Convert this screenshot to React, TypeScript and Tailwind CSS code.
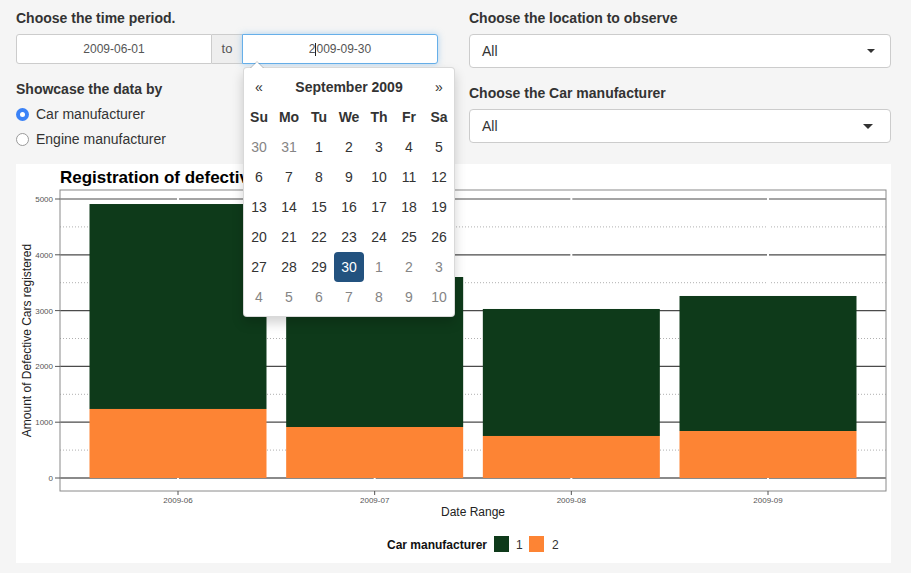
import React from "react";

const bars = [
  { label: "2009-06", total: 4910, second: 1237 },
  { label: "2009-07", total: 3602, second: 914 },
  { label: "2009-08", total: 3029, second: 753 },
  { label: "2009-09", total: 3262, second: 842 },
];

// chart geometry (px inside the white panel)
const left = 44;
const right = 870;
const top = 26;
const bottom = 327;
const step = (right - left) / 4.2;
const barW = step * 0.9;
const yOf = (v: number) => 314 - v * 0.0558;
const cx = (i: number) => left + step * (0.6 + i);

const weeks = [
  [30, 31, 1, 2, 3, 4, 5],
  [6, 7, 8, 9, 10, 11, 12],
  [13, 14, 15, 16, 17, 18, 19],
  [20, 21, 22, 23, 24, 25, 26],
  [27, 28, 29, 30, 1, 2, 3],
  [4, 5, 6, 7, 8, 9, 10],
];

const isOther = (row: number, d: number) => (row === 0 && d > 20) || (row >= 4 && d < 15);

const DefectChart = () => (
  <svg width={875} height={399} className="block">
    {/* minor grid */}
    {[500, 1500, 2500, 3500, 4500].map((v) => (
      <line key={v} x1={left} x2={right} y1={yOf(v)} y2={yOf(v)} stroke="#b0b0b0" strokeWidth={1} strokeDasharray="1 2" />
    ))}
    {/* major grid */}
    {[1000, 2000, 3000, 4000, 5000].map((v) => (
      <line key={v} x1={left} x2={right} y1={yOf(v)} y2={yOf(v)} stroke="#4a4a4a" strokeWidth={1.2} />
    ))}
    <line x1={left} x2={right} y1={yOf(0)} y2={yOf(0)} stroke="#8a8a8a" strokeWidth={2} />
    {bars.map((b, i) => (
      <line key={b.label} x1={cx(i)} x2={cx(i)} y1={top} y2={bottom} stroke="#ffffff" strokeWidth={2} />
    ))}
    {/* bars */}
    {bars.map((b, i) => (
      <g key={b.label}>
        <rect x={cx(i) - barW / 2} y={yOf(b.total)} width={barW} height={yOf(b.second) - yOf(b.total)} fill="#0e3a1a" />
        <rect x={cx(i) - barW / 2} y={yOf(b.second)} width={barW} height={yOf(0) - yOf(b.second)} fill="#fd8434" />
      </g>
    ))}
    {/* panel border */}
    <rect x={left} y={top} width={right - left} height={bottom - top} fill="none" stroke="#8a8a8a" strokeWidth={1} />
    {/* y axis */}
    {[0, 1000, 2000, 3000, 4000, 5000].map((v) => (
      <g key={v}>
        <line x1={left - 5} x2={left} y1={yOf(v)} y2={yOf(v)} stroke="#555" strokeWidth={1} />
        <text x={left - 7} y={yOf(v) + 3} textAnchor="end" fontSize={8} fill="#555">
          {v}
        </text>
      </g>
    ))}
    {/* x axis */}
    {bars.map((b, i) => (
      <g key={b.label}>
        <line x1={cx(i)} x2={cx(i)} y1={bottom} y2={bottom + 4} stroke="#555" strokeWidth={1} />
        <text x={cx(i)} y={bottom + 12} textAnchor="middle" fontSize={8} fill="#555">
          {b.label}
        </text>
      </g>
    ))}
    <text x={(left + right) / 2} y={352} textAnchor="middle" fontSize={12} fill="#222">
      Date Range
    </text>
    <text transform={`translate(15 ${(top + bottom) / 2}) rotate(-90)`} textAnchor="middle" fontSize={12} fill="#222">
      Amount of Defective Cars registered
    </text>
    <text x={left} y={19} fontSize={17} fontWeight={700} fill="#000">
      Registration of defective Cars
    </text>
    {/* legend */}
    <text x={471} y={385} textAnchor="end" fontSize={12} fontWeight={700} fill="#111">
      Car manufacturer
    </text>
    <rect x={478} y={372} width={15} height={16} fill="#0e3a1a" />
    <text x={500} y={385} fontSize={12} fill="#333">
      1
    </text>
    <rect x={513} y={372} width={15} height={16} fill="#fd8434" />
    <text x={536} y={385} fontSize={12} fill="#333">
      2
    </text>
  </svg>
);

const DatePicker = () => (
  <div className="absolute left-0 top-[32px] z-10 w-[212px] rounded-[4px] border border-black/15 bg-white py-[4px] shadow-[0_6px_12px_rgba(0,0,0,0.175)]">
    <div className="absolute -top-[7px] left-[6px] h-0 w-0 border-x-[7px] border-b-[7px] border-x-transparent border-b-black/20" />
    <div className="absolute -top-[6px] left-[7px] h-0 w-0 border-x-[6px] border-b-[6px] border-x-transparent border-b-white" />
    <div className="grid grid-cols-7 text-center text-[14px] text-[#333]">
      <div className="flex h-[30px] items-center justify-center">«</div>
      <div className="col-span-5 flex h-[30px] items-center justify-center font-bold">September 2009</div>
      <div className="flex h-[30px] items-center justify-center">»</div>
      {["Su", "Mo", "Tu", "We", "Th", "Fr", "Sa"].map((d) => (
        <div key={d} className="flex h-[30px] items-center justify-center font-bold">
          {d}
        </div>
      ))}
      {weeks.map((w, r) =>
        w.map((d, c) => {
          const active = r === 4 && d === 30;
          return (
            <div key={`${r}-${c}`} className="flex h-[30px] items-center justify-center">
              {active ? (
                <span className="flex h-[30px] w-[31px] items-center justify-center rounded-[4px] bg-[#23527f] text-white">
                  {d}
                </span>
              ) : (
                <span className={isOther(r, d) ? "text-[#858585]" : ""}>{d}</span>
              )}
            </div>
          );
        })
      )}
    </div>
  </div>
);

const Select = ({ small }: { small?: boolean }) => (
  <div className="flex h-[34px] items-center justify-between rounded-[4px] border border-[#ccc] bg-white pl-[12px] pr-[13px] text-[14px] text-[#333]">
    <span>All</span>
    {small ? (
      <span className="mr-[2px] h-0 w-0 border-x-[4px] border-t-[4px] border-x-transparent border-t-[#333]" />
    ) : (
      <span className="mr-[4px] h-0 w-0 border-x-[5px] border-t-[5px] border-x-transparent border-t-[#333]" />
    )}
  </div>
);

const App = () => {
  return (
    <div className="h-[573px] overflow-hidden bg-[#f5f5f5] pl-[16px] pr-[20px] font-['Liberation_Sans',Arial,sans-serif] text-[#333]">
      <div className="grid grid-cols-2 items-start gap-x-[31px] pt-[8px]">
        <div>
          <div className="mb-[6px] text-[14px] leading-[20px] font-bold">Choose the time period.</div>
          <div className="flex h-[30px] text-[12px] text-[#555]">
            <div className="flex w-[196px] items-center justify-center rounded-l-[3px] border border-[#ccc] bg-white">2009-06-01</div>
            <div className="flex w-[30px] items-center justify-center border-y border-[#ccc] bg-[#eee] text-[13px]">to</div>
            <div className="relative flex flex-1 items-center justify-center rounded-r-[3px] border border-[#66afe9] bg-white shadow-[0_0_6px_rgba(102,175,233,0.5)]">
              <span>2</span>
              <span className="h-[13px] w-px bg-[#222]" />
              <span>009-09-30</span>
              <DatePicker />
            </div>
          </div>
          <div className="mt-[15px] mb-[3px] text-[14px] leading-[20px] font-bold">Showcase the data by</div>
          <div className="flex h-[25px] items-center gap-[7px] text-[14px]">
            <span className="flex h-[13px] w-[13px] items-center justify-center rounded-full bg-[#3a82f7]">
              <span className="h-[5px] w-[5px] rounded-full bg-white" />
            </span>
            <span>Car manufacturer</span>
          </div>
          <div className="flex h-[25px] items-center gap-[7px] text-[14px]">
            <span className="h-[13px] w-[13px] rounded-full border border-[#9a9a9a] bg-white" />
            <span>Engine manufacturer</span>
          </div>
        </div>
        <div>
          <div className="mb-[6px] text-[14px] leading-[20px] font-bold">Choose the location to observe</div>
          <Select small />
          <div className="mt-[15px] mb-[6px] text-[14px] leading-[20px] font-bold">Choose the Car manufacturer</div>
          <Select />
        </div>
      </div>
      <div className="mt-[12px] h-[399px] bg-white">
        <DefectChart />
      </div>
    </div>
  );
};

export default App;
